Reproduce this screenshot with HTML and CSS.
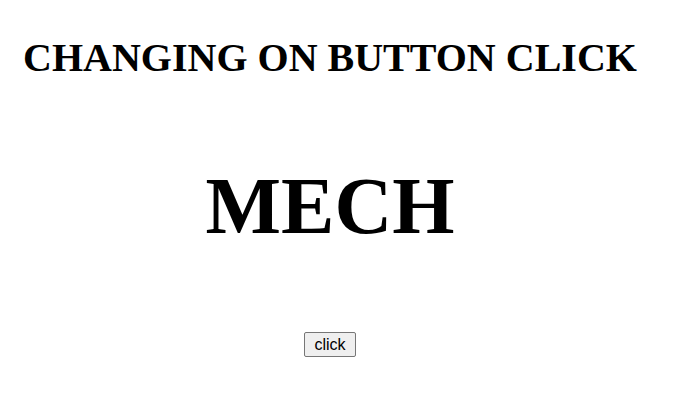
FILE: index.html
```html
<!DOCTYPE html>
<html>
<head>
<meta charset="utf-8">
<link rel="stylesheet" href="styles.css">
</head>
<body>
<div class="page">
  <h1 class="title">CHANGING ON BUTTON CLICK</h1>
  <h2 class="word">MECH</h2>
  <button class="btn">click</button>
</div>
</body>
</html>
```
FILE: styles.css
```css
html, body {
  margin: 0;
  padding: 0;
  background: #fff;
}
.page {
  width: 660px;
  display: flex;
  flex-direction: column;
  align-items: center;
  font-family: "Liberation Serif", "Times New Roman", serif;
  color: #000;
}
.title {
  font-size: 40px;
  font-weight: bold;
  margin: 35px 0 0 0;
  line-height: 46px;
}
.word {
  font-size: 80px;
  font-weight: bold;
  margin: 79px 0 0 0;
  line-height: 92px;
}
.btn {
  margin-top: 80px;
  font-family: "Liberation Sans", Arial, sans-serif;
  font-size: 16px;
  line-height: 17px;
  padding: 3px 9px;
  background: #efefef;
  border: 1px solid #767676;
  border-radius: 2px;
  color: #000;
}
```
